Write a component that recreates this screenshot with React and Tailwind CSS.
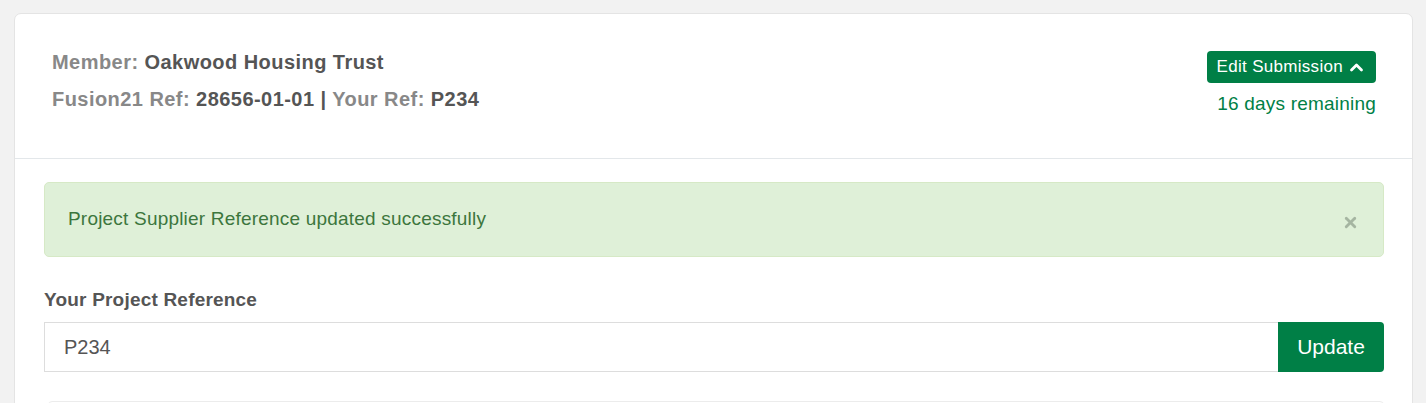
import { X } from 'lucide-react';

function ChevronUp() {
    return (
        <svg viewBox="0 0 24 24" className="w-[15px] h-[15px] ml-[6px]" fill="none" stroke="currentColor" strokeWidth="4.5" strokeLinecap="round" strokeLinejoin="round">
            <path d="M4 16 L12 8 L20 16" />
        </svg>
    );
}

export default function App() {
    return (
        <div className="min-h-screen bg-[#f2f2f2] pt-[13px] pl-[14px] pr-[13px] font-['Liberation_Sans',Arial,sans-serif]">
            <div className="bg-white border border-[#e4e4e4] rounded-t-[7px]">
                {/* submission header */}
                <div className="flex justify-between pl-[37px] pr-[36px] pt-[30px] pb-[40px] border-b border-[#e3e7ea]">
                    <div className="text-[20px] tracking-[0.45px] leading-[37px] font-bold text-[#888]">
                        <p>
                            Member: <span className="text-[#555]">Oakwood Housing Trust</span>
                        </p>
                        <p>
                            Fusion21 Ref: <span className="text-[#555]">28656-01-01 | </span>Your Ref:{' '}
                            <span className="text-[#555]">P234</span>
                        </p>
                    </div>
                    <div className="flex flex-col items-end pt-[7px]">
                        <button className="flex items-center h-[32px] pl-[10px] pr-[12px] rounded-[4px] bg-[#007f46] text-white text-[17px] tracking-[0.3px]">
                            Edit Submission
                            <ChevronUp />
                        </button>
                        <span className="mt-[8px] text-[19px] tracking-[0.2px] leading-[26px] text-[#007f46]">16 days remaining</span>
                    </div>
                </div>

                {/* body */}
                <div className="pt-[23px] pl-[29px] pr-[28px]">
                    <div className="flex items-center justify-between h-[75px] pl-[23px] pr-[24px] rounded-[5px] bg-[#dff0d8] border border-[#d6e9c6] text-[#3c763d] text-[19px] tracking-[0.2px]">
                        <span>Project Supplier Reference updated successfully</span>
                        <X className="w-[17px] h-[17px] text-[#a5b5a1] mt-[6px]" strokeWidth={4} />
                    </div>

                    <label className="block mt-[32px] text-[19px] tracking-[0.2px] leading-[22px] font-bold text-[#555]">
                        Your Project Reference
                    </label>
                    <div className="flex mt-[11px] h-[50px]">
                        <input
                            className="flex-1 min-w-0 border border-[#ddd] border-r-0 px-[19px] text-[20px] text-[#555] outline-none"
                            defaultValue="P234"
                        />
                        <button className="w-[106px] rounded-r-[4px] bg-[#007f46] text-white text-[21px]">Update</button>
                    </div>

                    <div className="mt-[29px] ml-[4px] h-[60px] border border-[#ececec] rounded-[4px]" />
                </div>
            </div>
        </div>
    );
}
